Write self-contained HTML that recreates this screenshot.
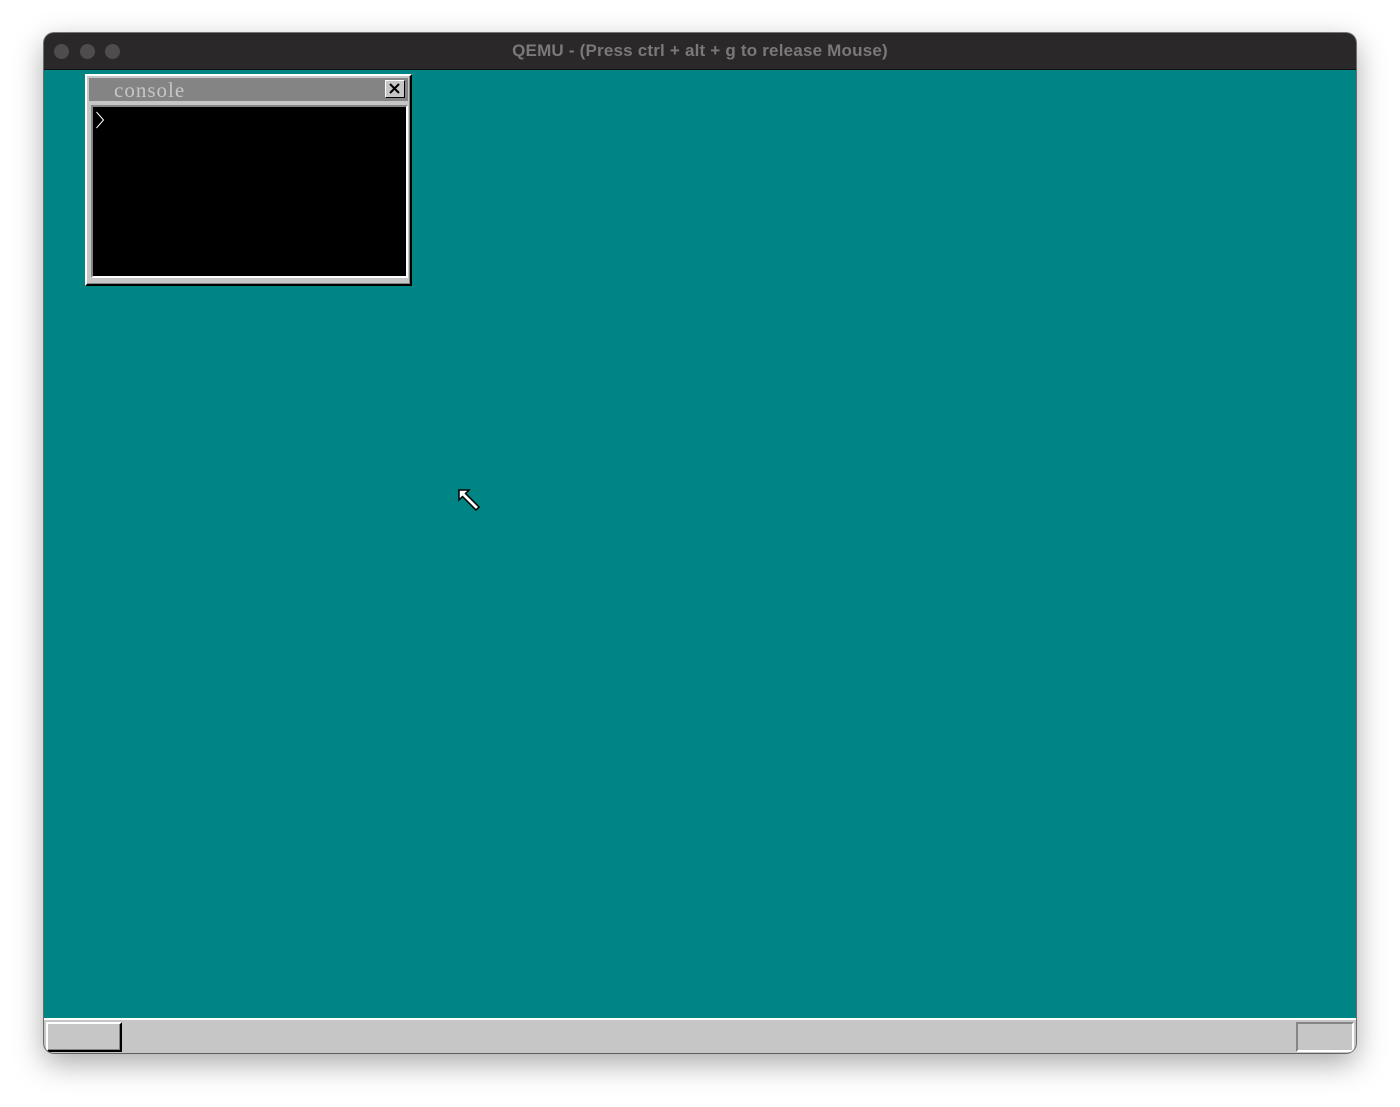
<!DOCTYPE html>
<html><head><meta charset="utf-8"><style>
html,body{margin:0;padding:0;width:1400px;height:1107px;background:#fff;overflow:hidden;position:relative}
div{position:absolute;box-sizing:border-box}
#win{left:44px;top:33px;width:1312px;height:1020px;border-radius:10px;overflow:hidden;background:#008484;box-shadow:0 10px 30px rgba(0,0,0,.35),0 0 0 1px rgba(0,0,0,.5)}
#tb{left:0;top:0;width:1312px;height:37px;background:#2a2828;border-bottom:1px solid #111}
.dot{top:11px;width:15px;height:15px;border-radius:50%;background:#4e4c4c}
#title{left:0;top:0;width:1312px;height:36px;text-align:center;color:#7a7878;font:bold 17px "Liberation Sans",sans-serif;line-height:35px;letter-spacing:0.2px}
#bar{left:0;top:985px;width:1312px;height:35px;background:#c6c6c6;border-top:2px solid #fff}
</style></head><body>
<div id="win">
 <div id="tb">
  <div class="dot" style="left:10px"></div>
  <div class="dot" style="left:36px"></div>
  <div class="dot" style="left:61px"></div>
  <div id="title">QEMU - (Press ctrl + alt + g to release Mouse)</div>
 </div>
 <div style="left:41px;top:41px;width:327px;height:212px;background:#c6c6c6;border-top:2px solid #fff;border-left:2px solid #fff;border-right:2px solid #000;border-bottom:2px solid #000;box-shadow:inset -1px -1px 0 #848484">
  <div style="left:2px;top:2px;width:319px;height:23px;background:#848484"></div>
  <div style="left:27px;top:2px;height:24px;color:#c6c6c6;font:21px 'Liberation Serif',serif;line-height:24px;letter-spacing:1px">console</div>
  <div style="left:298px;top:4px;width:20px;height:18px;background:#c6c6c6;border-top:1px solid #fff;border-left:1px solid #fff;border-right:1px solid #000;border-bottom:1px solid #000">
   <svg width="18" height="16" style="position:absolute;left:0;top:0"><path d="M4 3L13 12M13 3L4 12" stroke="#000" stroke-width="2"/></svg>
  </div>
  <div style="left:4px;top:29px;width:317px;height:173px;background:#000;border-top:2px solid #848484;border-left:2px solid #848484;border-right:2px solid #fff;border-bottom:2px solid #fff">
   <svg width="20" height="24" style="position:absolute;left:2px;top:3px"><path d="M1.5 2L8.5 10L1.5 18" stroke="#fff" stroke-width="1" fill="none"/></svg>
  </div>
 </div>
 <svg width="24" height="24" style="position:absolute;left:414px;top:456px">
  <path d="M1 1H11L7.5 4.5L21 18L18 21L4.5 7.5L1 11Z" fill="#fff" stroke="#000" stroke-width="1.5"/>
 </svg>
 <div id="bar">
  <div style="left:2px;top:2px;width:76px;height:30px;background:#c6c6c6;border-top:2px solid #fff;border-left:2px solid #fff;border-right:2px solid #000;border-bottom:2px solid #000;box-shadow:inset -1px -1px 0 #848484"></div>
  <div style="left:1252px;top:2px;width:58px;height:30px;background:#c6c6c6;border-top:2px solid #848484;border-left:2px solid #848484;border-right:2px solid #fff;border-bottom:2px solid #fff"></div>
 </div>
</div>
</body></html>
